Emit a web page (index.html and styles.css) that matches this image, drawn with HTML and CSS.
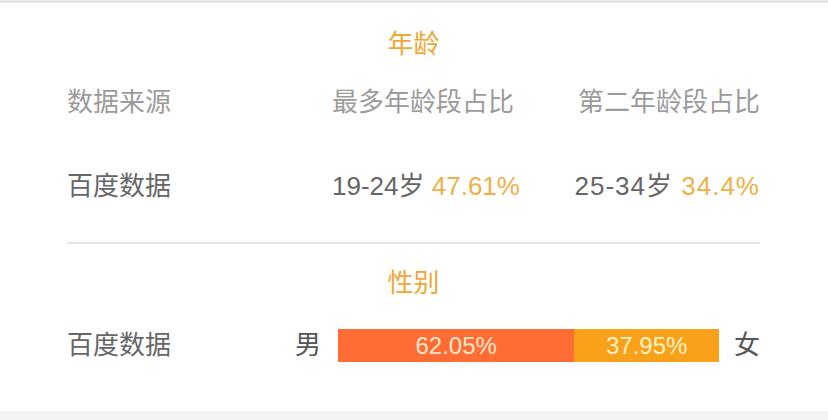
FILE: index.html
```html
<!DOCTYPE html>
<html lang="zh-CN">
<head>
<meta charset="utf-8">
<link rel="stylesheet" href="styles.css">
</head>
<body>
<div class="page">
  <div class="top-rule"></div>
  <section class="card">
    <h2 class="title">年龄</h2>
    <div class="grid head">
      <div class="c1">数据来源</div>
      <div class="c2">最多年龄段占比</div>
      <div class="c3">第二年龄段占比</div>
    </div>
    <div class="grid data">
      <div class="c1">百度数据</div>
      <div class="c2">19-24岁 <span class="pct">47.61%</span></div>
      <div class="c3 wide">25-34岁 <span class="pct">34.4%</span></div>
    </div>
    <hr class="divider">
    <h2 class="title title-gender">性别</h2>
    <div class="gender-row">
      <div class="src">百度数据</div>
      <div class="sex">男</div>
      <div class="bar">
        <div class="seg male" style="width:62.05%">62.05%</div>
        <div class="seg female">37.95%</div>
      </div>
      <div class="sex">女</div>
    </div>
  </section>
  <div class="bottom-band"></div>
</div>
</body>
</html>
```
FILE: styles.css
```css
* { box-sizing: border-box; }
html, body {
  margin: 0;
  padding: 0;
  background: #fff;
}
body {
  width: 828px;
  height: 420px;
  overflow: hidden;
  font-family: "Liberation Sans", "Noto Sans CJK SC", sans-serif;
  font-size: 26px;
  color: #666;
}
.page {
  display: flex;
  flex-direction: column;
  height: 420px;
}
.top-rule {
  height: 3px;
  background: #e6e6e6;
}
.card {
  padding: 0 68px 0 67px;
}
.title {
  margin: 23px 0 0;
  font-size: 26px;
  font-weight: 400;
  line-height: 36px;
  text-align: center;
  color: #f2a634;
}
.grid {
  display: grid;
  grid-template-columns: 265px 1fr auto;
  line-height: 36px;
}
.grid .c3 { text-align: right; }
.head {
  margin-top: 22px;
  color: #9b9b9b;
}
.data {
  margin-top: 48px;
  color: #666;
}
.wide { letter-spacing: 1px; }
.pct { color: #f0b046; }
.divider {
  margin: 38px 0 0;
  border: 0;
  height: 2px;
  background: #e4e4e4;
}
.title-gender {
  margin-top: 21px;
}
.gender-row {
  margin-top: 26px;
  display: flex;
  align-items: center;
  height: 36px;
  line-height: 36px;
}
.src { flex: 1; }
.sex { color: #555; }
.bar {
  width: 381px;
  height: 33px;
  margin: 0 15px 0 17px;
  display: flex;
  font-size: 24px;
  line-height: 33px;
}
.seg {
  text-align: center;
  color: rgba(255, 240, 215, 0.95);
}
.male { background: #ff6d35; }
.female {
  flex: 1;
  background: #f9a11b;
  color: #fff2c4;
}
.bottom-band {
  margin-top: auto;
  height: 9px;
  background: #f3f3f3;
}
```
